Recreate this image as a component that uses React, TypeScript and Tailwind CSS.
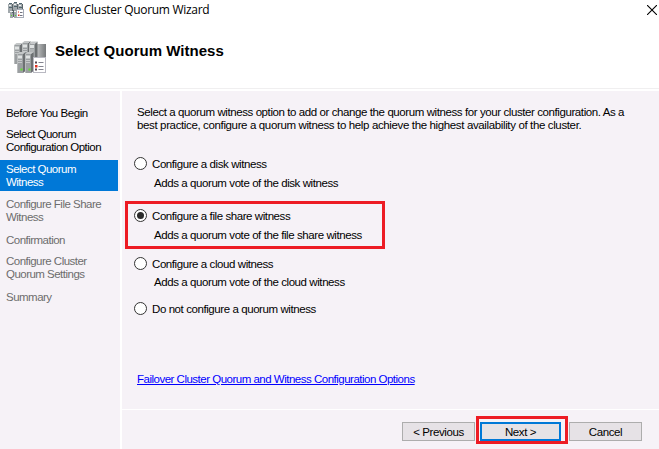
import React from "react";

function Tower({ x, y, led }: { x: number; y: number; led?: boolean }) {
  return (
    <g transform={`translate(${x} ${y})`}>
      <path d="M6 2 L8.5 0 V19 L6 21Z" fill="#6c7072" />
      <path d="M0 2 H6 V21 H0Z" fill="#9b9fa1" />
      <path d="M0 2 L2.5 0 H8.5 L6 2Z" fill="#c3c6c7" />
      <path d="M1 3.5h4v3h-4z" fill="#dfe2e2" />
      <path d="M1 8.5h4M1 10.5h4" stroke="#c6c9ca" />
      <path d="M.5 2v19" stroke="#b9bcbd" />
      {led && <rect x="3.5" y="16.5" width="2" height="2" fill="#5fe02e" />}
    </g>
  );
}

function ClusterIcon() {
  return (
    <svg width="32" height="32" viewBox="0 0 32 32" className="block shrink-0">
      <defs>
        <linearGradient id="cabinet" x1="0" y1="0" x2="1" y2="0">
          <stop offset="0" stopColor="#c4c6c7" />
          <stop offset="1" stopColor="#76797b" />
        </linearGradient>
      </defs>
      <path d="M22 3 H32 V17 H22Z" fill="url(#cabinet)" />
      <Tower x={0} y={2} />
      <Tower x={8} y={0} />
      <Tower x={15} y={0.5} />
      <Tower x={3} y={11} led />
      <Tower x={11} y={11} led />
      <rect x="19.5" y="16.5" width="12" height="15" fill="#fff" stroke="#b9b9c2" />
      <path d="M24.5 21.5h5M24.5 25.5h5M24.5 28.5h5" stroke="#84848f" />
      <rect x="21" y="20.5" width="2" height="2" fill="#55444f" />
      <rect x="21" y="24" width="2.5" height="2.5" fill="#e0301e" />
      <rect x="21" y="27.5" width="2" height="2" fill="#55444f" />
    </svg>
  );
}

function SmallClusterIcon() {
  return (
    <svg width="16" height="16" viewBox="0 0 16 16" className="block shrink-0">
      <path d="M0 2h4v9H0zM5 1h4v9H5zM10 2h5v6h-5zM2 7h3v9H2zM6 7h3v9H6z" fill="#a1a8ac" />
      <path d="M4 2h1v9H4zM9 2h1v8H9zM14 2h1v5h-1zM5 8h1v7H5z" fill="#596469" />
      <path d="M1 1.5h3M6 .5h3M11 1.5h3M1 5.5h3M6 4.5h3M11 5.5h3" stroke="#4f6670" />
      <path d="M1 3.5h2M6 2.5h2M11 3.5h2M2 9.5h3M6 9.5h2" stroke="#eef2f3" />
      <path d="M3 13.5h1M7 13.5h1" stroke="#55d62e" />
      <rect x="8.5" y="7.5" width="7" height="8" fill="#fff" stroke="#a7adb8" />
      <path d="M12 10.5h2.5M12 13.5h2.5" stroke="#71717e" />
      <path d="M10 9.5h1v1h-1zM10 12.5h1.5v1.5H10z" fill="#db3420" />
    </svg>
  );
}

function Radio({ checked }: { checked?: boolean }) {
  return (
    <svg width="13" height="13" viewBox="0 0 13 13" className="block shrink-0">
      <circle cx="6.5" cy="6.5" r="6" fill="#fff" stroke="#333" />
      {checked && <circle cx="6.5" cy="6.5" r="3.5" fill="#2b2b2b" />}
    </svg>
  );
}

function Option({ label, note, checked, noteClass = "" }: { label: string; note?: string; checked?: boolean; noteClass?: string }) {
  return (
    <div className="tracking-[-0.42px]">
      <div className="flex h-[13px] items-start gap-[5px]">
        <Radio checked={checked} />
        <span className="mt-px">{label}</span>
      </div>
      {note && <div className={`pl-5 ${noteClass}`}>{note}</div>}
    </div>
  );
}

export default function App() {
  return (
    <div className="flex h-[449px] w-[659px] flex-col overflow-hidden whitespace-nowrap bg-white font-['Liberation_Sans',Arial,sans-serif] text-[11.5px] leading-[13px] tracking-[-0.41px] text-black">
      <header className="flex h-[88px] shrink-0 flex-col">
        <div className="flex h-[19px] items-center pl-2 pr-[2px]">
          <SmallClusterIcon />
          <span className="ml-[5px] font-['Open_Sans','Noto_Sans',sans-serif] text-xs tracking-[-0.3px]">Configure Cluster Quorum Wizard</span>
          <svg width="10" height="10" viewBox="0 0 10 10" className="ml-auto"><path d="M0 0l10 10M10 0L0 10" stroke="#000" strokeWidth="1.1" /></svg>
        </div>
        <div className="flex pl-[14px] pt-[22px]">
          <ClusterIcon />
          <h1 className="ml-[9px] mt-px text-[15px] font-bold leading-[17px] tracking-[0.03px]">Select Quorum Witness</h1>
        </div>
      </header>
      <div className="h-px shrink-0 bg-[#f0eff0]" />
      <div className="mt-[2px] flex min-h-0 flex-1 gap-[2px]">
        <nav className="w-[120px] shrink-0 bg-[#f6f2f7] pt-4 tracking-[-0.52px] text-[#6d6d6d]">
          <div className="pl-[6px] tracking-[-0.45px] text-black">Before You Begin</div>
          <div className="mt-2 pl-[6px] text-black">Select Quorum<br />Configuration Option</div>
          <div className="mt-[6px] h-[31px] w-[118px] bg-[#0078d7] pl-[6px] pt-[3px] text-white">Select Quorum<br />Witness</div>
          <div className="mt-[7px] pl-[6px]">Configure File Share<br />Witness</div>
          <div className="mt-[10px] pl-[6px]">Confirmation</div>
          <div className="mt-2 pl-[6px]">Configure Cluster<br />Quorum Settings</div>
          <div className="mt-[10px] pl-[6px]">Summary</div>
        </nav>
        <main className="flex flex-1 flex-col bg-[#f6f2f7]">
          <div className="h-[318px] shrink-0 pt-[15px]">
            <p className="pl-[15px]">
              Select a quorum witness option to add or change the quorum witness for your cluster configuration. As a
              <br />
              <span className="tracking-[-0.365px]">best practice, configure a quorum witness to help achieve the highest availability of the cluster.</span>
            </p>
            <div className="mt-[25px] pl-3"><Option label="Configure a disk witness" note="Adds a quorum vote of the disk witness" noteClass="mt-[7px]" /></div>
            <div className="ml-[3px] mt-[11px] h-[48px] w-[260px] border-[3px] border-[#ed1c24] pl-[6px] pt-[5px]">
              <Option checked label="Configure a file share witness" note="Adds a quorum vote of the file share witness" noteClass="mt-[7px]" />
            </div>
            <div className="mt-2 pl-3"><Option label="Configure a cloud witness" note="Adds a quorum vote of the cloud witness" noteClass="mt-[6px]" /></div>
            <div className="mt-[13px] pl-3"><Option label="Do not configure a quorum witness" /></div>
            <a className="ml-[15px] mt-[58px] block w-fit tracking-[-0.5px] text-[#0000ff] underline">Failover Cluster Quorum and Witness Configuration Options</a>
          </div>
          <div className="h-px bg-white" />
          <footer className="flex items-start pl-[280px] pt-[6px]">
            <button className="mt-[6px] h-[19px] w-[73px] border border-[#adadad] bg-[#e6e2e6] pt-px leading-[16px]">&lt; Previous</button>
            <div className="ml-px h-[28px] w-[92px] border-[3px] border-[#ed1c24] pl-px pt-[3px]">
              <button className="block h-[19px] w-[81px] border-2 border-[#0078d7] bg-[#e6e2e6] pt-px leading-[14px]">Next &gt;</button>
            </div>
            <button className="ml-px mt-[6px] h-[19px] w-[73px] border border-[#adadad] bg-[#e6e2e6] pt-px leading-[16px]">Cancel</button>
          </footer>
        </main>
      </div>
    </div>
  );
}
